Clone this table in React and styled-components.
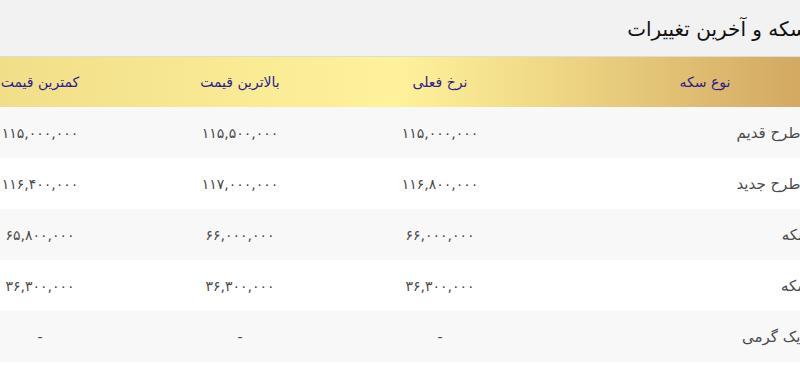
import React from 'react';
import styled, { createGlobalStyle } from 'styled-components';

const GlobalStyle = createGlobalStyle`
  html, body {
    margin: 0;
    padding: 0;
    background: #ffffff;
  }
  body {
    font-family: "DejaVu Sans", "Noto Sans", sans-serif;
  }
`;

const Viewport = styled.div`
  width: 800px;
  height: 365px;
  overflow: hidden;
  direction: rtl;
`;

const Panel = styled.section`
  width: 1130px;
  margin-right: -70px;
  background: #ffffff;
`;

const TitleBar = styled.header`
  height: 57px;
  display: flex;
  align-items: center;
  padding-right: 10px;
  padding-top: 2px;
  box-sizing: border-box;
  background: #f2f2f2;
  border-bottom: 1px solid #dcdcdc;
`;

const Title = styled.h2`
  margin: 0;
  font-size: 20px;
  font-weight: normal;
  color: #111111;
`;

const Table = styled.table`
  width: 100%;
  border-collapse: collapse;
  table-layout: fixed;
`;

const HeadRow = styled.tr`
  height: 50px;
  background: linear-gradient(
    to right,
    #efdb87 0%,
    #f1de89 23%,
    #fff29c 58%,
    #f1db88 70%,
    #d3a862 94%,
    #cea25c 100%
  );
`;

const HeadCell = styled.th`
  font-size: 14px;
  font-weight: normal;
  color: #2d1c8f;
  text-align: center;
  padding: 0 8px;
`;

const Row = styled.tr`
  height: 51px;
  background: ${({ $striped }) => ($striped ? '#f8f8f8' : '#ffffff')};
`;

const Cell = styled.td`
  font-size: ${({ $name }) => ($name ? '15px' : '14px')};
  color: #4a4a4a;
  text-align: ${({ $name }) => ($name ? 'right' : 'center')};
  padding: ${({ $name }) => ($name ? '0 36px 0 8px' : '0 8px')};
  white-space: nowrap;
`;

const columns = ['نوع سکه', 'نرخ فعلی', 'بالاترین قیمت', 'کمترین قیمت', 'تغییرات', 'زمان'];
const widths = [330, 200, 200, 200, 200, 0];

const rows = [
  ['سکه طرح قدیم', '۱۱۵,۰۰۰,۰۰۰', '۱۱۵,۵۰۰,۰۰۰', '۱۱۵,۰۰۰,۰۰۰', '۰', '۱۲:۳۰'],
  ['سکه طرح جدید', '۱۱۶,۸۰۰,۰۰۰', '۱۱۷,۰۰۰,۰۰۰', '۱۱۶,۴۰۰,۰۰۰', '۰', '۱۲:۳۰'],
  ['نیم سکه', '۶۶,۰۰۰,۰۰۰', '۶۶,۰۰۰,۰۰۰', '۶۵,۸۰۰,۰۰۰', '۰', '۱۲:۳۰'],
  ['ربع سکه', '۳۶,۳۰۰,۰۰۰', '۳۶,۳۰۰,۰۰۰', '۳۶,۳۰۰,۰۰۰', '۰', '۱۲:۳۰'],
  ['سکه یک گرمی', '-', '-', '-', '-', '-'],
];

const App = () => (
  <>
    <GlobalStyle />
    <Viewport>
      <Panel>
        <TitleBar>
          <Title>قیمت سکه و آخرین تغییرات</Title>
        </TitleBar>
        <Table>
          <colgroup>
            {widths.map((w, i) => (
              <col key={i} style={w ? { width: w } : undefined} />
            ))}
          </colgroup>
          <thead>
            <HeadRow>
              {columns.map((c) => (
                <HeadCell key={c}>{c}</HeadCell>
              ))}
            </HeadRow>
          </thead>
          <tbody>
            {rows.map((r, i) => (
              <Row key={r[0]} $striped={i % 2 === 0}>
                {r.map((v, j) => (
                  <Cell key={j} $name={j === 0}>
                    {v}
                  </Cell>
                ))}
              </Row>
            ))}
          </tbody>
        </Table>
      </Panel>
    </Viewport>
  </>
);

export default App;
